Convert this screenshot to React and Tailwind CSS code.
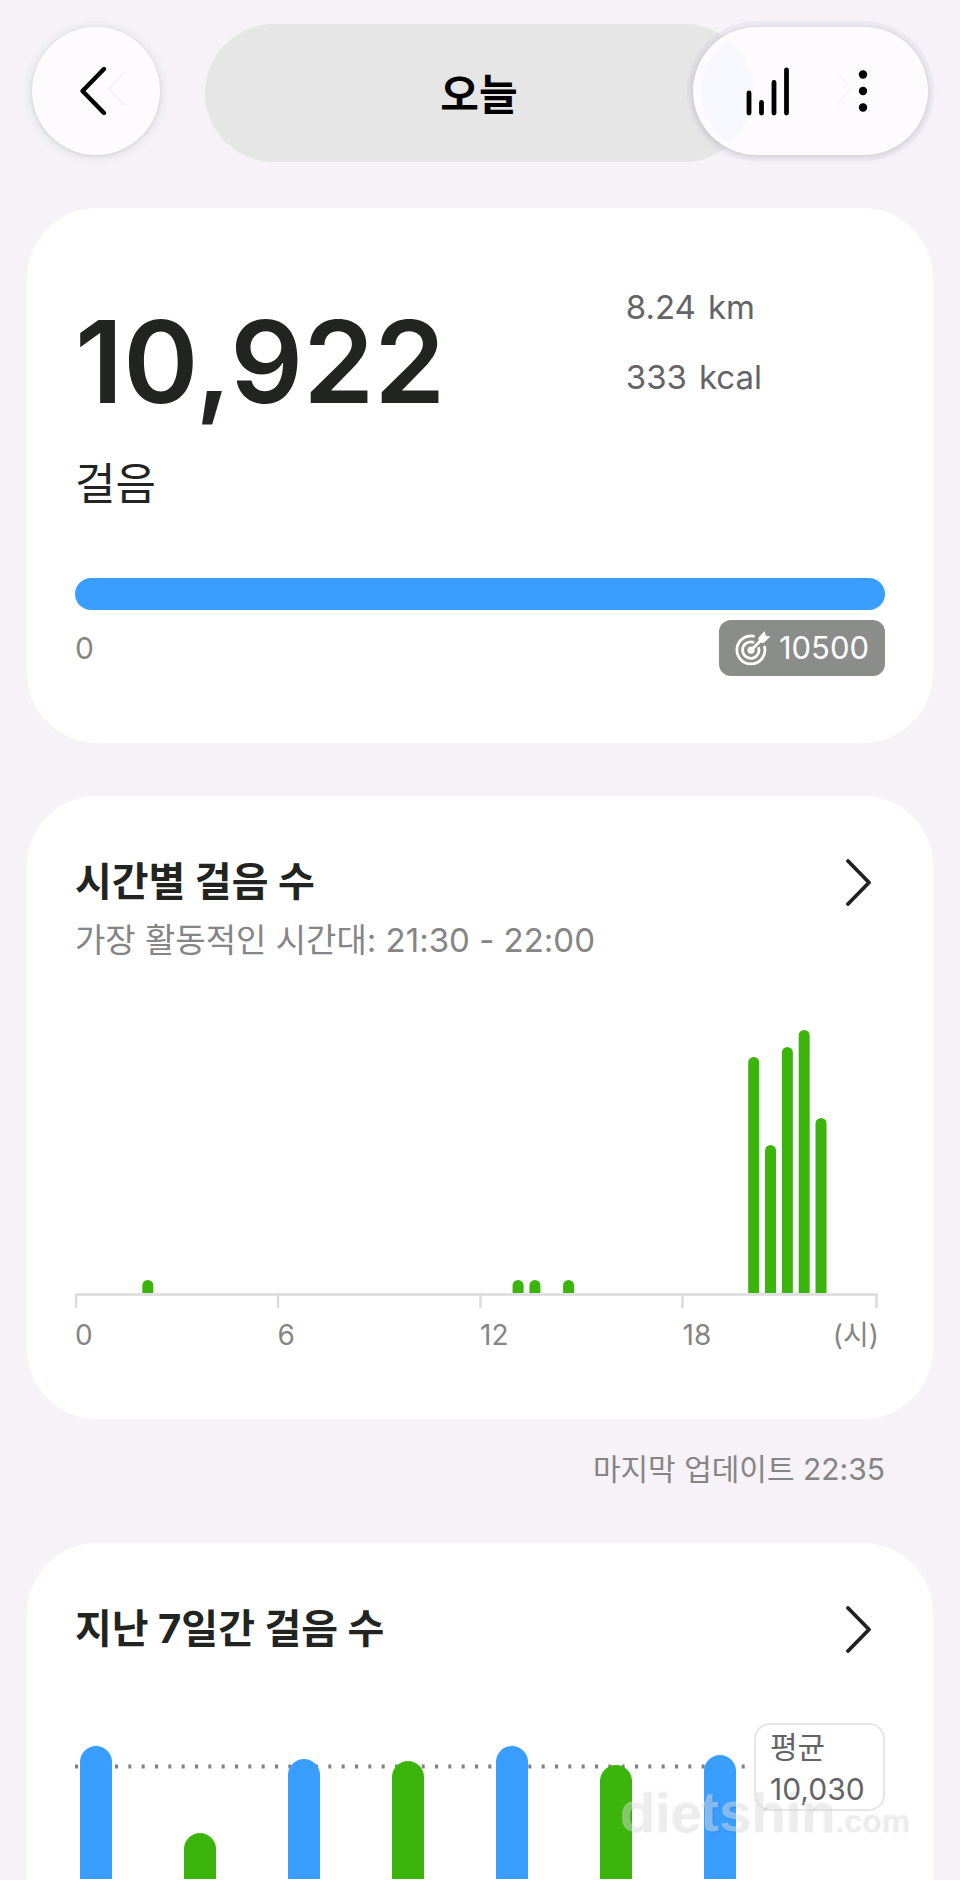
import React from "react";

const GREEN = "#3bb50b";
const BLUE = "#3a9eff";

// one slot per half hour, 48 slots a day
const hourlySteps = [
  { slot: 4, height: 13 },
  { slot: 26, height: 13 },
  { slot: 27, height: 13 },
  { slot: 29, height: 13 },
  { slot: 40, height: 236 },
  { slot: 41, height: 148 },
  { slot: 42, height: 246 },
  { slot: 43, height: 263 },
  { slot: 44, height: 175 },
];

const weeklySteps = [
  { day: 0, top: 23, reached: true },
  { day: 1, top: 110, reached: false },
  { day: 2, top: 36, reached: true },
  { day: 3, top: 38, reached: false },
  { day: 4, top: 23, reached: true },
  { day: 5, top: 42, reached: false },
  { day: 6, top: 32, reached: true },
];

const ChevronRight = () => (
  <svg className="w-7 h-12" viewBox="0 0 28 48" fill="none">
    <path
      d="M3 3 L24 24.500 L3 46"
      stroke="#222"
      strokeWidth="3.800"
      strokeLinecap="round"
      strokeLinejoin="round"
    />
  </svg>
);

const TargetIcon = () => (
  <svg className="w-9 h-9" viewBox="0 0 36 36" fill="none">
    <g stroke="#fff" strokeWidth="2.8" strokeLinecap="round">
      <path d="M18.5 6.2 A14 14 0 1 0 29.6 17" />
      <path d="M18 12.2 A8.2 8.2 0 1 0 23.8 18.4" />
      <path d="M16 20.2 L27 9.2" strokeWidth="3" />
    </g>
    <circle cx="16" cy="20.2" r="3.6" fill="#fff" />
    <path d="M23.4 7.8 L29.8 1 L30.6 5.6 L35.4 6.4 L28.6 13 L23.8 12.4 Z" fill="#fff" />
  </svg>
);

const Header = () => (
  <header className="flex items-start px-8 pt-6">
    <button
      type="button"
      aria-label="뒤로"
      className="mt-[3px] w-32 h-32 shrink-0 rounded-full bg-[#fefbfe] flex items-center justify-center shadow-[0_1px_5px_rgba(0,0,0,0.14),0_0_0_6px_#eeeef3,0_2px_4px_6px_#eeeef3]"
    >
      <svg className="w-32 h-32" viewBox="0 0 128 128" fill="none" strokeLinecap="round" strokeLinejoin="round">
        <path d="M92 46 L77 62 L92 78" stroke="#f8f5f9" strokeWidth="3" />
        <path d="M72 42 L50.500 64 L72 86" stroke="#000" strokeWidth="4.400" />
      </svg>
    </button>
    <div className="ml-[45px] h-[138px] flex-1 rounded-full bg-[#e6e6e6] flex items-center justify-center pt-1">
      <h1 className="text-[42px] leading-14 font-bold text-black">오늘</h1>
    </div>
    <div className="relative mt-[3px] -ml-15 w-[235px] h-32 shrink-0 rounded-full bg-[#fefbfe] shadow-[0_1px_5px_rgba(0,0,0,0.14),0_0_0_6px_rgba(200,200,215,0.18),0_2px_4px_6px_rgba(200,200,215,0.08)]">
      <svg className="absolute inset-0 w-full h-full" viewBox="0 0 235 128" fill="none">
        <path d="M36 14 Q60 34 60 64 Q60 94 36 116 Q8 96 8 64 Q8 32 36 14 Z" fill="#f6f8fe" />
        <path d="M144 46 L158 62 L144 78" stroke="#f8f7fb" strokeWidth="3" />
      </svg>
      <div className="relative flex h-full items-center">
        <button type="button" aria-label="통계" className="ml-11 w-16 h-16 flex items-center justify-center">
          <svg className="w-16 h-16" viewBox="0 0 64 64" stroke="#000" strokeWidth="4.800" strokeLinecap="round">
            <path d="M12 34 V54 M24.500 43.500 V54 M37 23.500 V54 M49.500 11 V54" />
          </svg>
        </button>
        <button type="button" aria-label="더보기" className="ml-7 w-16 h-16 flex items-center justify-center">
          <svg className="w-16 h-16" viewBox="0 0 64 64" fill="#000">
            <circle cx="34" cy="15.500" r="4.200" />
            <circle cx="34" cy="32" r="4.200" />
            <circle cx="34" cy="48.500" r="4.200" />
          </svg>
        </button>
      </div>
    </div>
  </header>
);

const TodayCard = () => (
  <section className="mt-[46px] rounded-[70px] bg-white px-12 pt-16 pb-[67px] text-[#222422]">
    <div className="flex items-start">
      <div className="w-[68%] pt-8 text-[114px] leading-[116px] font-semibold">10,922</div>
      <div className="flex-1 text-[33px] leading-[70px] text-[#646468]">
        <div className="flex gap-3">
          <span>8.24</span>
          <span>km</span>
        </div>
        <div className="flex gap-3">
          <span>333</span>
          <span>kcal</span>
        </div>
      </div>
    </div>
    <div className="mt-9 text-[44px] leading-14">걸음</div>
    <div className="mt-[66px] h-8 rounded-full bg-[#3a9eff]" />
    <div className="mt-2.5 flex items-center justify-between">
      <span className="text-[30px] leading-14 text-[#858585]">0</span>
      <span className="flex h-14 items-center gap-2 rounded-xl bg-[#8b8d8a] px-4 text-[31px] text-white">
        <TargetIcon />
        10500
      </span>
    </div>
  </section>
);

const CardTitle = ({ children }) => (
  <div className="flex items-center justify-between pr-3">
    <h2 className="text-[40px] leading-15 font-bold text-[#222422]">{children}</h2>
    <a href="#" aria-label="자세히 보기">
      <ChevronRight />
    </a>
  </div>
);

const HourlyCard = () => (
  <section className="mt-[53px] rounded-[70px] bg-white px-12 pt-14 pb-[66px] text-[#858585]">
    <CardTitle>시간별 걸음 수</CardTitle>
    <p className="mt-1 text-[33px] leading-12">가장 활동적인 시간대: 21:30 - 22:00</p>
    <svg className="mt-16 block w-full h-auto" viewBox="0 0 810 281">
      {hourlySteps.map(({ slot, height }) => {
        const x = slot * 16.83;
        const y = 265 - height;
        return (
          <path
            key={slot}
            d={`M${x} 265 V${y + 5.5} a5.5 5.5 0 0 1 11 0 V265 Z`}
            fill={GREEN}
          />
        );
      })}
      <path
        d="M0 266.500 H803 M1 266 V280 M203 266 V280 M405.500 266 V280 M607.500 266 V280 M801.500 266 V280"
        stroke="#dcdcdc"
        strokeWidth="2.500"
        fill="none"
      />
    </svg>
    <div className="mt-2 flex text-[28px] leading-9">
      <span className="w-1/4">0</span>
      <span className="w-1/4">6</span>
      <span className="w-1/4">12</span>
      <span className="flex w-1/4 justify-between pr-1.5">
        <span>18</span>
        <span>(시)</span>
      </span>
    </div>
  </section>
);

const WeeklyCard = () => (
  <section className="relative mt-14 flex-1 rounded-t-[70px] bg-white px-12 pt-14">
    <CardTitle>지난 7일간 걸음 수</CardTitle>
    <div className="mt-16 flex items-start gap-2">
      <svg className="block min-w-0 flex-1 h-auto" viewBox="0 0 671 156">
        <path d="M0 43.500 H671" stroke="#808080" strokeWidth="4" strokeDasharray="3 10.333" />
        {weeklySteps.map(({ day, top, reached }) => {
          const x = 5 + day * 104;
          return (
            <path
              key={day}
              d={`M${x} 156 V${top + 16} a16 16 0 0 1 32 0 V156 Z`}
              fill={reached ? BLUE : GREEN}
            />
          );
        })}
      </svg>
      <div className="w-[131px] rounded-2xl border-2 border-[#e6e6e6] px-3.5 text-[#646468]">
        <div className="text-[30px] leading-11">평균</div>
        <div className="text-[30px] leading-10">10,030</div>
      </div>
    </div>
    <div className="absolute right-6 bottom-10 flex items-baseline font-['Liberation_Sans',sans-serif] font-bold leading-none text-white/40 [text-shadow:1px_1px_2px_rgba(0,0,0,0.12)]">
      <span className="text-[56px]">dietshin</span>
      <span className="text-[32px]">.com</span>
    </div>
  </section>
);

const App = () => {
  return (
    <div className="flex min-h-screen flex-col bg-[#f6f2f7] font-[Inter,'Noto_Sans_CJK_KR',sans-serif]">
      <Header />
      <main className="flex flex-1 flex-col px-[27px]">
        <TodayCard />
        <HourlyCard />
        <p className="mt-8 pr-12 text-right text-[30px] leading-9 text-[#858585]">
          마지막 업데이트 22:35
        </p>
        <WeeklyCard />
      </main>
    </div>
  );
};

export default App;
